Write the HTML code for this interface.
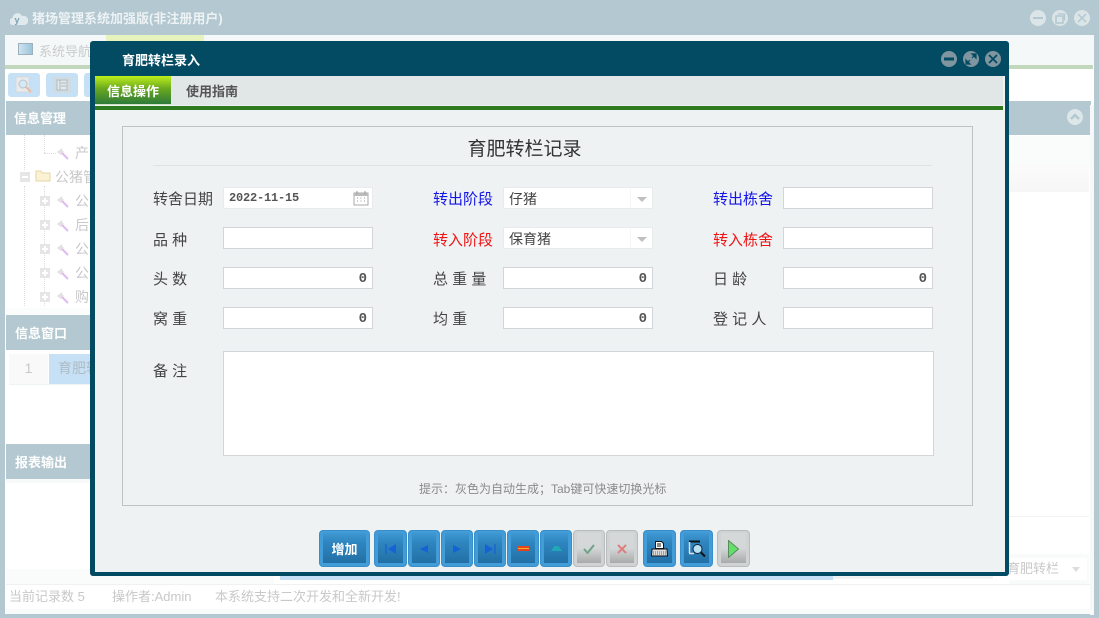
<!DOCTYPE html>
<html lang="zh"><head><meta charset="utf-8"><style>
*{box-sizing:border-box;margin:0;padding:0}
html,body{width:1099px;height:618px;overflow:hidden;background:#b3c8d0}
body{position:relative;font-family:"Liberation Sans","Noto Sans CJK SC",sans-serif;font-size:14px;color:#444}
.a{position:absolute}
.t{position:absolute;white-space:nowrap;line-height:20px}
.f{position:absolute;width:150px;height:22px;background:#fff;border:1px solid #d2d6d8;font-size:14px;line-height:21px;padding:0 5px;color:#444}
.n{text-align:right;font-weight:bold;font-family:"Liberation Mono",monospace;font-size:14px;line-height:22px;padding-right:5px;color:#555}
.s{border-color:#e8ebec;line-height:22px}
.s i{position:absolute;right:5px;top:9px;border:5px solid transparent;border-top:5px solid #c0c0c0;border-bottom:0}
.s b{position:absolute;right:21px;top:0;bottom:0;width:1px;background:#f5f5f5}
.l{position:absolute;white-space:nowrap;line-height:20px;font-size:15px;color:#444}
.b{position:absolute;top:530px;height:37px;border:1px solid #3a8fca;border-radius:4px;background:#429cd8;display:flex;align-items:center;justify-content:center}
.b u{position:absolute;left:3px;right:3px;top:2px;bottom:3px;background:linear-gradient(#3f98d2,#2f86c0 30%,#2270a6)}
.b svg{position:relative}
.g{border-color:#b8bcbd;background:#cfd3d3}
.g u{background:linear-gradient(#d6d9d9,#d4d7d7 50%,#a9abab)}
.h{position:absolute;background:#b3c8d0;color:#fff;font-weight:bold;font-size:13px;line-height:20px}
.tr{position:absolute;font-size:14px;color:#c8c8c8;line-height:18px;white-space:nowrap}
.p{position:absolute;width:10px;height:10px;background:#e6e6e6}
.p:after{content:"";position:absolute;left:2px;top:4px;width:6px;height:2px;background:#fff}
.q:before{content:"";position:absolute;left:4px;top:2px;width:2px;height:6px;background:#fff}
.k{position:absolute;width:14px;height:14px}
</style></head><body>
<!-- main window -->
<div class="a" style="left:5px;top:35px;width:1089px;height:579px;background:#fff"></div>
<div class="a" style="left:5px;top:35px;width:1089px;height:30px;background:#f5f8f8"></div>
<div class="a" style="left:106px;top:35px;width:98px;height:30px;background:#e6f3bd"></div>
<div class="a" style="left:5px;top:65px;width:1088px;height:4px;background:#c2d8bc"></div>
<svg class="a" style="left:10px;top:11px" width="18" height="16" viewBox="0 0 18 16"><path d="M3 14a3.500 3.500 0 0 1-.5-7A5 5 0 0 1 12 5a4.500 4.500 0 0 1 3 9z" fill="#dfe9ee"/><text x="4.500" y="12" font-size="9" font-weight="bold" fill="#7d9fb0" font-family="Liberation Sans">y</text></svg>
<div class="t" style="left:32px;top:9px;color:#edf2f4;font-weight:bold;font-size:13px">猪场管理系统加强版(非注册用户)</div>
<svg class="a" style="left:1029px;top:9px" width="62" height="18" viewBox="0 0 62 18">
<circle cx="9" cy="9" r="8" fill="#dbe4e7"/><rect x="4" y="8" width="10" height="2" fill="#b3c8d0"/>
<circle cx="31" cy="9" r="8" fill="#dbe4e7"/><rect x="27" y="7" width="7" height="7" fill="none" stroke="#b3c8d0" stroke-width="1.500"/><path d="M29 5h6.500v6.500" fill="none" stroke="#b3c8d0" stroke-width="1.200"/>
<circle cx="53" cy="9" r="8" fill="#dbe4e7"/><path d="M49 5l8 8M57 5l-8 8" stroke="#b3c8d0" stroke-width="1.500"/></svg>
<div class="a" style="left:18px;top:43px;width:15px;height:12px;border:1px solid #9fb0bd;background:linear-gradient(90deg,#cfe3f0,#9cc4dc)"></div>
<div class="t" style="left:39px;top:42px;font-size:13px;color:#c9cccc">系统导航</div>
<!-- toolbar -->
<div class="a" style="left:8px;top:73px;width:32px;height:24px;background:#c6e0f5;border-radius:3px"><svg class="a" style="left:7px;top:3px" width="18" height="18" viewBox="0 0 18 18"><rect x="1" y="1" width="13" height="15" fill="#e8ebec" stroke="#d5d9db"/><circle cx="8" cy="8" r="4" fill="#d5e8f4" stroke="#b8c4cc"/><path d="M11 11l5 5" stroke="#eab9a0" stroke-width="2"/></svg></div>
<div class="a" style="left:46px;top:73px;width:32px;height:24px;background:#c6e0f5;border-radius:3px"><svg class="a" style="left:7px;top:4px" width="18" height="16" viewBox="0 0 18 16"><rect width="18" height="16" fill="#d0dce2"/><rect x="4" y="3" width="10" height="10" fill="#e3e8ea" stroke="#aebbc2"/><path d="M7 3v10M8 6h5M8 9h5" stroke="#aebbc2"/></svg></div>
<div class="a" style="left:84px;top:73px;width:10px;height:24px;background:#c6e0f5;border-radius:3px 0 0 3px"></div>
<!-- left / top panel header -->
<div class="h" style="left:6px;top:101px;width:1085px;height:34px;padding:8px 0 0 9px;font-size:13px"><span style="margin-left:-1px">信息管理</span></div>
<svg class="a" style="left:1067px;top:109px" width="16" height="16" viewBox="0 0 16 16"><circle cx="8" cy="8" r="8" fill="#dde6e9"/><path d="M4 10l4-4 4 4" fill="none" stroke="#b3c8d0" stroke-width="2.500"/></svg>
<!-- tree -->
<div class="a" style="left:24px;top:135px;width:0;height:35px;border-left:1px dotted #ddd"></div>
<div class="a" style="left:44px;top:135px;width:0;height:18px;border-left:1px dotted #ddd"></div>
<div class="a" style="left:44px;top:153px;width:12px;height:0;border-top:1px dotted #ddd"></div>
<div class="a" style="left:44px;top:186px;width:0;height:120px;border-left:1px dotted #ddd"></div>
<div class="a" style="left:24px;top:186px;width:0;height:120px;border-left:1px dotted #ddd"></div>
<svg class="k" style="left:56px;top:146px" viewBox="0 0 14 14"><path d="M1 6l5-4v2l2 2-3 3z" fill="#e2e2e2"/><path d="M6 7l6 6" stroke="#dcbcee" stroke-width="2"/></svg>
<div class="tr" style="left:75px;top:144px">产</div>
<div class="p" style="left:20px;top:172px"></div>
<svg class="a" style="left:35px;top:169px" width="16" height="13" viewBox="0 0 16 13"><path d="M1 2h5l1 2h8v8H1z" fill="#fbf1d4" stroke="#e6d6a6"/></svg>
<div class="tr" style="left:55px;top:168px">公猪管</div>
<div class="p q" style="left:40px;top:196px"></div><svg class="k" style="left:56px;top:194px" viewBox="0 0 14 14"><path d="M1 6l5-4v2l2 2-3 3z" fill="#e2e2e2"/><path d="M6 7l6 6" stroke="#dcbcee" stroke-width="2"/></svg><div class="tr" style="left:75px;top:192px">公</div>
<div class="p q" style="left:40px;top:220px"></div><svg class="k" style="left:56px;top:218px" viewBox="0 0 14 14"><path d="M1 6l5-4v2l2 2-3 3z" fill="#e2e2e2"/><path d="M6 7l6 6" stroke="#dcbcee" stroke-width="2"/></svg><div class="tr" style="left:75px;top:216px">后</div>
<div class="p q" style="left:40px;top:244px"></div><svg class="k" style="left:56px;top:242px" viewBox="0 0 14 14"><path d="M1 6l5-4v2l2 2-3 3z" fill="#e2e2e2"/><path d="M6 7l6 6" stroke="#dcbcee" stroke-width="2"/></svg><div class="tr" style="left:75px;top:240px">公</div>
<div class="p q" style="left:40px;top:268px"></div><svg class="k" style="left:56px;top:266px" viewBox="0 0 14 14"><path d="M1 6l5-4v2l2 2-3 3z" fill="#e2e2e2"/><path d="M6 7l6 6" stroke="#dcbcee" stroke-width="2"/></svg><div class="tr" style="left:75px;top:264px">公</div>
<div class="p q" style="left:40px;top:292px"></div><svg class="k" style="left:56px;top:290px" viewBox="0 0 14 14"><path d="M1 6l5-4v2l2 2-3 3z" fill="#e2e2e2"/><path d="M6 7l6 6" stroke="#dcbcee" stroke-width="2"/></svg><div class="tr" style="left:75px;top:288px">购</div>
<!-- lower left -->
<div class="a" style="left:6px;top:308px;width:84px;height:7px;background:#fbfcfc"></div>
<div class="h" style="left:6px;top:315px;width:84px;height:35px;padding:9px 0 0 9px">信息窗口</div>
<div class="a" style="left:9px;top:354px;width:39px;height:30px;background:#f9f9f9;text-align:center;line-height:28px;color:#c8c8c8">1</div>
<div class="a" style="left:49px;top:354px;width:41px;height:30px;background:#c6e0f5;line-height:28px;padding-left:9px;color:#aebcc5;overflow:hidden;white-space:nowrap;font-size:14px">育肥转</div>
<div class="a" style="left:9px;top:384px;width:81px;height:1px;background:#eef3f6"></div>
<div class="h" style="left:6px;top:444px;width:84px;height:35px;padding:9px 0 0 9px">报表输出</div>
<div class="a" style="left:6px;top:479px;width:84px;height:4px;background:#f8fafa"></div>
<div class="a" style="left:6px;top:569px;width:268px;height:16px;background:#fafbfb"></div>
<!-- right bits -->
<div class="a" style="left:1009px;top:136px;width:81px;height:28px;background:#fafbfb"></div>
<div class="a" style="left:1009px;top:164px;width:80px;height:28px;background:linear-gradient(#fbfbfb,#f6f6f6)"></div>
<div class="a" style="left:1009px;top:516px;width:80px;height:1px;background:#f2f4f4"></div>
<div class="a" style="left:1009px;top:554px;width:80px;height:30px;background:#f9fafa"></div>
<div class="a" style="left:1006px;top:558px;width:81px;height:22px;background:#fff"></div>
<div class="t" style="left:1007px;top:559px;font-size:13px;color:#c8c8c8">育肥转栏</div>
<div class="a" style="left:1072px;top:567px;border:4px solid transparent;border-top:5px solid #dcdcdc;border-bottom:0"></div>
<div class="a" style="left:1090px;top:105px;width:4px;height:510px;background:#f7f9f9"></div>
<div class="a" style="left:280px;top:574px;width:553px;height:6px;background:#c6e0f5"></div>
<div class="a" style="left:833px;top:574px;width:160px;height:5px;background:#f1f3f3"></div>
<!-- status -->
<div class="a" style="left:6px;top:584px;width:1084px;height:1px;background:#f0f2f2"></div>
<div class="a" style="left:6px;top:609px;width:1087px;height:5px;background:#f9fbfb"></div>
<div class="t" style="left:9px;top:587px;font-size:13px;color:#c8c8c8">当前记录数 5</div>
<div class="t" style="left:112px;top:587px;font-size:13px;color:#c8c8c8">操作者:Admin</div>
<div class="t" style="left:215px;top:587px;font-size:13px;color:#c8c8c8">本系统支持二次开发和全新开发!</div>

<!-- dialog -->
<div class="a" style="left:90px;top:41px;width:919px;height:535px;background:#034a63;border-radius:3px"></div>
<div class="t" style="left:122px;top:51px;color:#fff;font-weight:bold;font-size:13px">育肥转栏录入</div>
<svg class="a" style="left:941px;top:51px" width="62" height="16" viewBox="0 0 62 16">
<circle cx="8" cy="8" r="8" fill="#7f959f"/><rect x="3" y="6.500" width="10" height="3" fill="#034a63"/>
<circle cx="30" cy="8" r="8" fill="#7f959f"/><path d="M26 12l3-3M34 4l-3 3M25 13v-4l4 4zM35 3v4l-4-4z" stroke="#034a63" stroke-width="1.200" fill="#034a63"/>
<circle cx="52" cy="8" r="8" fill="#7f959f"/><path d="M48 4l8 8M56 4l-8 8" stroke="#034a63" stroke-width="1.800"/></svg>
<div class="a" style="left:95px;top:76px;width:910px;height:496px;background:#eef2f3"></div>
<div class="a" style="left:95px;top:76px;width:908px;height:29px;background:#e1e6e6"></div>
<div class="a" style="left:95px;top:76px;width:76px;height:29px;background:linear-gradient(#bdf01c,#6aa81e 45%,#2e7a3a);text-align:center;color:#fff;font-weight:bold;font-size:13px;line-height:31px;border-bottom:1px solid #cfe0c0">信息操作</div>
<div class="t" style="left:186px;top:82px;font-weight:bold;font-size:13px;color:#555">使用指南</div>
<div class="a" style="left:95px;top:106px;width:908px;height:4px;background:#2e7a1e"></div>
<!-- form -->
<div class="a" style="left:122px;top:126px;width:851px;height:380px;border:1px solid #bfc3c4"></div>
<div class="t" style="left:325px;width:400px;top:138px;text-align:center;font-size:19px;line-height:24px;color:#333"><span style="margin-left:-1px">育肥转栏记录</span></div>
<div class="a" style="left:153px;top:165px;width:779px;height:1px;background:#e0e3e4"></div>

<div class="l" style="left:153px;top:190px">转舍日期</div>
<div class="l" style="left:153px;top:231px">品 种</div>
<div class="l" style="left:153px;top:270px">头 数</div>
<div class="l" style="left:153px;top:310px">窝 重</div>
<div class="l" style="left:153px;top:362px">备 注</div>
<div class="l" style="left:433px;top:190px;color:#1414e6">转出阶段</div>
<div class="l" style="left:433px;top:231px;color:#f01414">转入阶段</div>
<div class="l" style="left:433px;top:270px">总 重 量</div>
<div class="l" style="left:433px;top:310px">均 重</div>
<div class="l" style="left:713px;top:190px;color:#1414e6">转出栋舍</div>
<div class="l" style="left:713px;top:231px;color:#f01414">转入栋舍</div>
<div class="l" style="left:713px;top:270px">日 龄</div>
<div class="l" style="left:713px;top:310px">登 记 人</div>

<div class="f s" style="left:223px;top:187px;font-family:'Liberation Mono',monospace;font-size:12px;line-height:20px;font-weight:bold;letter-spacing:-.2px;color:#555">2022-11-15
<svg class="a" style="left:129px;top:2px" width="16" height="16" viewBox="0 0 16 16"><rect x="1" y="3" width="14" height="12" fill="none" stroke="#aaa"/><rect x="1" y="3" width="14" height="3" fill="#bbb"/><path d="M4 1v3M12 1v3M4 8h1M7.500 8h1M11 8h1M4 11h1M7.500 11h1M11 11h1" stroke="#999"/></svg></div>
<div class="f" style="left:223px;top:227px"></div>
<div class="f n" style="left:223px;top:267px">0</div>
<div class="f n" style="left:223px;top:307px">0</div>
<div class="f s" style="left:503px;top:187px">仔猪<b></b><i></i></div>
<div class="f s" style="left:503px;top:227px">保育猪<b></b><i></i></div>
<div class="f n" style="left:503px;top:267px">0</div>
<div class="f n" style="left:503px;top:307px">0</div>
<div class="f" style="left:783px;top:187px"></div>
<div class="f" style="left:783px;top:227px"></div>
<div class="f n" style="left:783px;top:267px">0</div>
<div class="f" style="left:783px;top:307px"></div>
<div class="f" style="left:223px;top:351px;width:711px;height:105px"></div>
<div class="t" style="left:419px;top:479px;font-size:12px;color:#8a8a8a">提示&#xFF1A;灰色为自动生成&#xFF1B;Tab键可快速切换光标</div>

<!-- buttons -->
<div class="b" style="left:319px;width:51px"><u></u><span style="position:relative;color:#fff;font-weight:bold;font-size:13px">增加</span></div>
<div class="b" style="left:374px;width:33px"><u></u><svg width="12" height="10" viewBox="0 0 12 10"><path d="M1 0v10" stroke="#1463d6" stroke-width="1.300"/><path d="M11 0v10L3 5z" fill="#1463d6"/></svg></div>
<div class="b" style="left:408px;width:32px"><u></u><svg width="8" height="8" viewBox="0 0 8 8"><path d="M8 0v8L0 4z" fill="#1463d6"/></svg></div>
<div class="b" style="left:441px;width:32px"><u></u><svg width="8" height="8" viewBox="0 0 8 8"><path d="M0 0v8l8-4z" fill="#1463d6"/></svg></div>
<div class="b" style="left:474px;width:32px"><u></u><svg width="12" height="10" viewBox="0 0 12 10"><path d="M11 0v10" stroke="#1463d6" stroke-width="1.300"/><path d="M1 0v10l8-5z" fill="#1463d6"/></svg></div>
<div class="b" style="left:507px;width:32px"><u></u><svg width="11" height="5" viewBox="0 0 11 5"><rect width="11" height="5" fill="#e8441c"/><rect y="2" width="11" height="1" fill="#f0b030"/></svg></div>
<div class="b" style="left:540px;width:32px"><u></u><svg width="11" height="5" viewBox="0 0 11 5"><path d="M0 5l3.500-5h4L11 5z" fill="#1ea8b8"/></svg></div>
<div class="b g" style="left:573px;width:32px"><u></u><svg width="12" height="10" viewBox="0 0 12 10"><path d="M1 5l3.500 4L11 1" fill="none" stroke="#6fa487" stroke-width="2"/></svg></div>
<div class="b g" style="left:606px;width:32px"><u></u><svg width="10" height="10" viewBox="0 0 10 10"><path d="M1 1l8 8M9 1l-8 8" stroke="#dc7f7f" stroke-width="2"/></svg></div>
<div class="b" style="left:643px;width:33px"><u></u><svg width="17" height="16" viewBox="0 0 17 16"><path d="M4.500.5h6l2 2v5h-8z" fill="#fff" stroke="#111"/><path d="M6 3h4M6 5h4" stroke="#111"/><path d="M1 8h15l.5 7H.5z" fill="#ddd" stroke="#111"/><path d="M2 11h13M2 13h13" stroke="#3a6fa8" stroke-dasharray="1 1"/></svg></div>
<div class="b" style="left:680px;width:33px"><u></u><svg width="18" height="17" viewBox="0 0 18 17"><path d="M1 1.500h11" stroke="#111" stroke-width="2"/><path d="M1.500 2v11M1 13.500h5" stroke="#dde" stroke-width="1.500"/><circle cx="9.500" cy="9" r="4.500" fill="#b8e0f4" stroke="#123"/><path d="M13 12.500l4 4" stroke="#111" stroke-width="2"/></svg></div>
<div class="b g" style="left:717px;width:33px"><u></u><svg width="11" height="18" viewBox="0 0 11 18"><path d="M.5.500v17L10.500 9z" fill="#63e06a" stroke="#5a8a60"/></svg></div>
</body></html>
